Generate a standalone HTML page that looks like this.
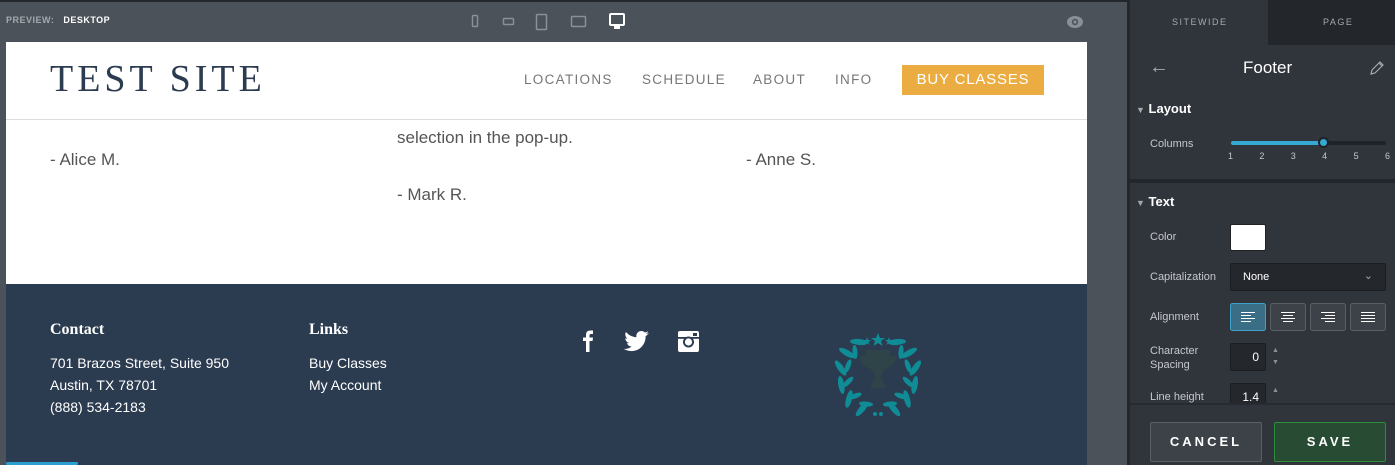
<!DOCTYPE html>
<html><head><meta charset="utf-8"><style>
*{margin:0;padding:0;box-sizing:border-box}
body{width:1395px;height:465px;overflow:hidden;background:#4b525a;font-family:"Liberation Sans",sans-serif;position:relative}
.abs{position:absolute}
.top{left:0;top:0;width:1395px;height:2px;background:#23262b}
.pv{left:6px;top:15px;font-size:9px;font-weight:bold;letter-spacing:.5px;color:#a4a9ae}
.pv b{color:#fff;margin-left:6px}
.page{left:6px;top:42px;width:1081px;height:242px;background:#fff}
.hdr{left:6px;top:42px;width:1081px;height:78px;border-bottom:1px solid #ddd;background:#fff}
.logo{left:50px;top:57px;font-family:"Liberation Serif",serif;font-size:38px;letter-spacing:4px;color:#2b3b50}
.nav{top:72px;font-size:13.5px;letter-spacing:1.3px;color:#777}
.buy{left:902px;top:65px;width:142px;height:30px;background:#ebad42;color:#fff;font-size:15px;letter-spacing:.8px;text-align:center;line-height:30px}
.txt{font-size:17px;color:#555}
.foot{left:6px;top:284px;width:1081px;height:181px;background:#2b3b50}
.fh{font-family:"Liberation Serif",serif;font-weight:bold;font-size:16px;color:#fff}
.fl{font-size:14px;color:#fff;line-height:22px}
.panel{left:1130px;top:0;width:265px;height:465px;background:#30343b}
.strip{left:1127px;top:0;width:3px;height:465px;background:#23262b}
.lbl{font-size:11px;color:#c5c8cc}
.btn{border:1px solid #5a5f66;border-radius:2px;background:#3d4249}
</style></head><body>
<div class="abs top"></div>
<div class="abs pv">PREVIEW: <b>DESKTOP</b></div>
<svg class="abs" style="left:468px;top:13px" width="170" height="20">
<rect x="4.5" y="2.5" width="5" height="11" rx="1" fill="none" stroke="#8a9096" stroke-width="1.5"/>
<rect x="35.5" y="5.5" width="10" height="6" rx="1" fill="none" stroke="#8a9096" stroke-width="1.5"/>
<rect x="68.5" y="1.5" width="10" height="15" rx="1" fill="none" stroke="#8a9096" stroke-width="1.5"/>
<rect x="103.5" y="3.5" width="14" height="10" rx="1" fill="none" stroke="#8a9096" stroke-width="1.5"/>
<rect x="142" y="1" width="14" height="11" rx="1" fill="none" stroke="#fff" stroke-width="2"/>
<rect x="146" y="13" width="6" height="3" fill="#fff"/>
</svg>
<svg class="abs" style="left:1066px;top:15px" width="18" height="14"><ellipse cx="9" cy="7" rx="8" ry="6" fill="#8a9096"/><circle cx="9" cy="7" r="3.2" fill="#4b525a"/><circle cx="9" cy="7" r="1.6" fill="#8a9096"/></svg>
<div class="abs page"></div>
<div class="abs txt" style="left:397px;top:128px">selection in the pop-up.</div>
<div class="abs txt" style="left:50px;top:150px">- Alice M.</div>
<div class="abs txt" style="left:746px;top:150px">- Anne S.</div>
<div class="abs txt" style="left:397px;top:185px">- Mark R.</div>
<div class="abs hdr"></div>
<div class="abs logo">TEST SITE</div>
<div class="abs nav" style="left:524px">LOCATIONS</div>
<div class="abs nav" style="left:642px">SCHEDULE</div>
<div class="abs nav" style="left:753px">ABOUT</div>
<div class="abs nav" style="left:835px">INFO</div>
<div class="abs buy">BUY CLASSES</div>
<div class="abs foot"></div>
<div class="abs fh" style="left:50px;top:321px">Contact</div>
<div class="abs fl" style="left:50px;top:352px">701 Brazos Street, Suite 950<br>Austin, TX 78701<br>(888) 534-2183</div>
<div class="abs fh" style="left:309px;top:321px">Links</div>
<div class="abs fl" style="left:309px;top:352px">Buy Classes<br>My Account</div>
<svg class="abs" style="left:578px;top:328px" width="125" height="26">
<path d="M8 24V13H5V9.5H8V7C8 4 9.5 2.5 12.5 2.5H15V6H13C11.8 6 11.5 6.5 11.5 7.5V9.5H15L14.5 13H11.5V24Z" fill="#fff"/>
<path d="M71 5C70 5.5 69 5.8 68 6C69 5.3 69.8 4.4 70.2 3.3C69.2 3.9 68.1 4.3 67 4.5C66 3.5 64.7 3 63.3 3C60.5 3 58.3 5.2 58.3 8C58.3 8.4 58.3 8.8 58.4 9.2C54.2 9 50.5 7 48 4C47.5 4.7 47.3 5.6 47.3 6.5C47.3 8.2 48.2 9.8 49.6 10.7C48.8 10.7 48 10.4 47.3 10.1C47.3 12.5 49 14.5 51.3 15C50.5 15.2 49.7 15.2 49 15.1C49.6 17.1 51.5 18.5 53.7 18.5C51.5 20.3 48.6 21.2 45.7 20.9C48 22.3 50.6 23.1 53.4 23.1C62.6 23.1 67.6 15.5 67.6 8.9V8.3C68.9 7.3 70 6.3 71 5Z" fill="#fff"/>
<rect x="100" y="3" width="21" height="21" rx="2" fill="#fff"/>
<rect x="100" y="9" width="21" height="1.8" fill="#2b3b50"/>
<circle cx="110.5" cy="14" r="5.5" fill="#2b3b50"/><circle cx="110.5" cy="14" r="3.6" fill="#fff"/>
<rect x="115" y="5" width="4" height="3" fill="#2b3b50"/>
</svg>
<svg class="abs" style="left:828px;top:330px" width="100" height="87">
<path d="M38 20H62V26H68C68 34 62 38 57 39C55 42 53 44 53 47L58 58H42L47 47C47 44 45 42 43 39C38 38 32 34 32 26H38Z" fill="#2f4449"/>
<g fill="#0f8c96">
<polygon points="50,3 52,8 57,8 53,11 54.5,16 50,13 45.5,16 47,11 43,8 48,8"/>
<polygon points="39,7 40,10 43,10 40.5,12 41.5,15 39,13 36.5,15 37.5,12 35,10 38,10"/>
<polygon points="61,7 62,10 65,10 62.5,12 63.5,15 61,13 58.5,15 59.5,12 57,10 60,10"/>
<g id="l">
<ellipse cx="31" cy="12" rx="3" ry="9" transform="rotate(-85 31 12)"/>
<ellipse cx="19" cy="23" rx="3" ry="9" transform="rotate(-60 19 23)"/>
<ellipse cx="12.6" cy="38" rx="3" ry="9" transform="rotate(-35 12.6 38)"/>
<ellipse cx="13.3" cy="55" rx="3" ry="9" transform="rotate(-10 13.3 55)"/>
<ellipse cx="21" cy="69" rx="3" ry="9" transform="rotate(15 21 69)"/>
<ellipse cx="34" cy="79" rx="3" ry="9" transform="rotate(40 34 79)"/>
<ellipse cx="27" cy="22" rx="2.5" ry="7" transform="rotate(-5 27 22)"/>
<ellipse cx="20" cy="36" rx="2.5" ry="7" transform="rotate(20 20 36)"/>
<ellipse cx="20" cy="52" rx="2.5" ry="7" transform="rotate(45 20 52)"/>
<ellipse cx="27" cy="66" rx="2.5" ry="7" transform="rotate(70 27 66)"/>
<ellipse cx="38" cy="74" rx="2.5" ry="7" transform="rotate(95 38 74)"/>
</g>
<use href="#l" transform="translate(100 0) scale(-1 1)"/>
<circle cx="47" cy="84" r="2"/><circle cx="53" cy="84" r="2"/>
</g>
</svg>
<div class="abs" style="left:6px;top:462px;width:72px;height:3px;background:#2a9fd0;border-radius:2px"></div>
<div class="abs strip"></div>
<div class="abs panel"></div>
<div class="abs" style="left:1268px;top:0;width:127px;height:45px;background:#23262b"></div>
<div class="abs" style="left:1172px;top:17px;font-size:9px;letter-spacing:1.5px;color:#a4a9ae">SITEWIDE</div>
<div class="abs" style="left:1323px;top:17px;font-size:9px;letter-spacing:1.5px;color:#a4a9ae">PAGE</div>
<div class="abs" style="left:1149px;top:56px;font-size:20px;color:#a4a9ae">←</div>
<div class="abs" style="left:1243px;top:58px;font-size:17px;color:#fff">Footer</div>
<svg class="abs" style="left:1369px;top:60px" width="16" height="16"><path d="M2 14L3 10L11 2L14 5L6 13Z M10 3L13 6" fill="none" stroke="#a4a9ae" stroke-width="1.2"/></svg>
<div class="abs" style="left:1136px;top:101px;font-size:13px;font-weight:bold;color:#fff"><span style="font-size:9px;color:#a4a9ae">▼</span> Layout</div>
<div class="abs lbl" style="left:1150px;top:138px">Columns</div>
<div class="abs" style="left:1231px;top:141px;width:155px;height:4px;border-radius:2px;background:#1f2226"></div>
<div class="abs" style="left:1231px;top:141px;width:92px;height:4px;border-radius:2px;background:#33a9d4"></div>
<div class="abs" style="left:1318px;top:137px;width:11px;height:11px;border-radius:50%;background:#33a9d4;border:2px solid #1f2226"></div>
<div class="abs" style="left:1228px;top:151px;width:162px;font-size:9px;color:#c5c8cc;display:flex;justify-content:space-between"><span>1</span><span>2</span><span>3</span><span>4</span><span>5</span><span>6</span></div>
<div class="abs" style="left:1130px;top:179px;width:265px;height:4px;background:#23262b"></div>
<div class="abs" style="left:1136px;top:194px;font-size:13px;font-weight:bold;color:#fff"><span style="font-size:9px;color:#a4a9ae">▼</span> Text</div>
<div class="abs lbl" style="left:1150px;top:231px">Color</div>
<div class="abs" style="left:1230px;top:224px;width:36px;height:27px;background:#fff;border:1px solid #222;border-radius:2px"></div>
<div class="abs lbl" style="left:1150px;top:271px">Capitalization</div>
<div class="abs" style="left:1230px;top:263px;width:156px;height:28px;background:#24272c;border:1px solid #1b1d21;border-radius:2px;color:#fff;font-size:11px;line-height:26px;padding-left:12px">None<span style="position:absolute;right:12px;top:-1px;color:#a4a9ae">⌄</span></div>
<div class="abs lbl" style="left:1150px;top:311px">Alignment</div>
<svg class="abs" style="left:1230px;top:303px" width="157" height="28">
<rect x="0.5" y="0.5" width="35" height="27" rx="2" fill="#3a6e87" stroke="#3fa0c8"/>
<rect x="40.5" y="0.5" width="35" height="27" rx="2" fill="#3d4249" stroke="#5a5f66"/>
<rect x="80.5" y="0.5" width="35" height="27" rx="2" fill="#3d4249" stroke="#5a5f66"/>
<rect x="120.5" y="0.5" width="35" height="27" rx="2" fill="#3d4249" stroke="#5a5f66"/>
<g stroke="#fff" stroke-width="1">
<path d="M11 9.5H25M11 12.5H21M11 15.5H25M11 18.5H21"/>
<path d="M51 9.5H65M53 12.5H63M51 15.5H65M53 18.5H63"/>
<path d="M91 9.5H105M95 12.5H105M91 15.5H105M95 18.5H105"/>
<path d="M131 9.5H145M131 12.5H145M131 15.5H145M131 18.5H145"/>
</g></svg>
<div class="abs lbl" style="left:1150px;top:344px;line-height:14px">Character<br>Spacing</div>
<div class="abs" style="left:1230px;top:343px;width:36px;height:28px;background:#24272c;border:1px solid #1b1d21;border-radius:2px;color:#fff;font-size:12px;line-height:26px;text-align:right;padding-right:6px">0</div>
<div class="abs" style="left:1272px;top:345px;font-size:7px;color:#8a9096;line-height:12px">▲<br>▼</div>
<div class="abs lbl" style="left:1150px;top:391px">Line height</div>
<div class="abs" style="left:1230px;top:383px;width:36px;height:28px;background:#24272c;border:1px solid #1b1d21;border-radius:2px;color:#fff;font-size:12px;line-height:26px;text-align:right;padding-right:6px">1.4</div>
<div class="abs" style="left:1272px;top:385px;font-size:7px;color:#8a9096;line-height:12px">▲</div>
<div class="abs" style="left:1130px;top:403px;width:265px;height:62px;background:#30343b;border-top:2px solid #272a30"></div>
<div class="abs btn" style="left:1150px;top:422px;width:112px;height:40px;color:#fff;font-size:13px;font-weight:bold;letter-spacing:3px;text-align:center;line-height:38px">CANCEL</div>
<div class="abs" style="left:1274px;top:422px;width:112px;height:40px;background:#274b33;border:1px solid #2f8a3c;border-radius:2px;color:#fff;font-size:13px;font-weight:bold;letter-spacing:3px;text-align:center;line-height:38px">SAVE</div>
</body></html>
